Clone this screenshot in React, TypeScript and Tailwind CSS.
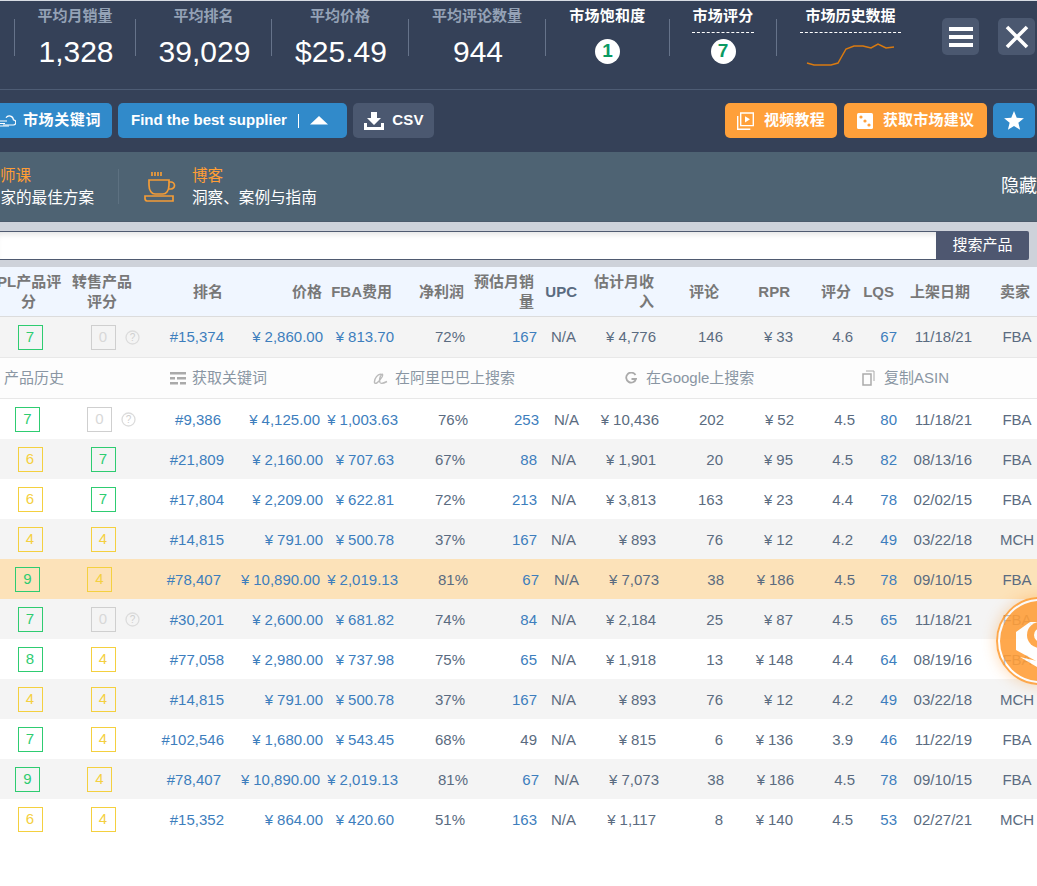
import React from "react";

const NORMAL = "grid-cols-[60px_86px_78px_99px_71px_71px_72px_39px_80px_67px_70px_60px_44px_75px_90px]";
const WIDE = "grid-cols-[55px_89px_77px_99px_78px_70px_71px_40px_80px_65px_70px_61px_42px_75px_90px]";
const HEAD = "grid-cols-[60px_86px_77px_99px_70px_72px_70px_43px_77px_65px_71px_61px_43px_76px_60px]";

type RowData = {
  a: number; b: number; rank: string; price: string; fba: string; net: string; sales: string; salesDark?: boolean;
  rev: string; reviews: string; rpr: string; rating: string; lqs: string; date: string; seller: string;
  wide?: boolean; bg: string; help?: boolean;
};

const rows: RowData[] = [
  { a: 7, b: 0, help: true, wide: true, bg: "bg-white", rank: "#9,386", price: "4,125.00", fba: "1,003.63", net: "76%", sales: "253", rev: "10,436", reviews: "202", rpr: "52", rating: "4.5", lqs: "80", date: "11/18/21", seller: "FBA" },
  { a: 6, b: 7, bg: "bg-[#f4f4f4]", rank: "#21,809", price: "2,160.00", fba: "707.63", net: "67%", sales: "88", rev: "1,901", reviews: "20", rpr: "95", rating: "4.5", lqs: "82", date: "08/13/16", seller: "FBA" },
  { a: 6, b: 7, bg: "bg-white", rank: "#17,804", price: "2,209.00", fba: "622.81", net: "72%", sales: "213", rev: "3,813", reviews: "163", rpr: "23", rating: "4.4", lqs: "78", date: "02/02/15", seller: "FBA" },
  { a: 4, b: 4, bg: "bg-[#f4f4f4]", rank: "#14,815", price: "791.00", fba: "500.78", net: "37%", sales: "167", rev: "893", reviews: "76", rpr: "12", rating: "4.2", lqs: "49", date: "03/22/18", seller: "MCH" },
  { a: 9, b: 4, wide: true, bg: "bg-[#fce2b9]", rank: "#78,407", price: "10,890.00", fba: "2,019.13", net: "81%", sales: "67", rev: "7,073", reviews: "38", rpr: "186", rating: "4.5", lqs: "78", date: "09/10/15", seller: "FBA" },
  { a: 7, b: 0, help: true, bg: "bg-[#f4f4f4]", rank: "#30,201", price: "2,600.00", fba: "681.82", net: "74%", sales: "84", rev: "2,184", reviews: "25", rpr: "87", rating: "4.5", lqs: "65", date: "11/18/21", seller: "FBA" },
  { a: 8, b: 4, bg: "bg-white", rank: "#77,058", price: "2,980.00", fba: "737.98", net: "75%", sales: "65", rev: "1,918", reviews: "13", rpr: "148", rating: "4.4", lqs: "64", date: "08/19/16", seller: "FBA" },
  { a: 4, b: 4, bg: "bg-[#f4f4f4]", rank: "#14,815", price: "791.00", fba: "500.78", net: "37%", sales: "167", rev: "893", reviews: "76", rpr: "12", rating: "4.2", lqs: "49", date: "03/22/18", seller: "MCH" },
  { a: 7, b: 4, bg: "bg-white", rank: "#102,546", price: "1,680.00", fba: "543.45", net: "68%", sales: "49", salesDark: true, rev: "815", reviews: "6", rpr: "136", rating: "3.9", lqs: "46", date: "11/22/19", seller: "FBA" },
  { a: 9, b: 4, wide: true, bg: "bg-[#f4f4f4]", rank: "#78,407", price: "10,890.00", fba: "2,019.13", net: "81%", sales: "67", rev: "7,073", reviews: "38", rpr: "186", rating: "4.5", lqs: "78", date: "09/10/15", seller: "FBA" },
  { a: 6, b: 4, bg: "bg-white", rank: "#15,352", price: "864.00", fba: "420.60", net: "51%", sales: "163", rev: "1,117", reviews: "8", rpr: "140", rating: "4.5", lqs: "53", date: "02/27/21", seller: "MCH" },
];

function Divider() {
  return <div className="w-[1px] h-[37px] bg-[#66738a] shrink-0 mt-[18px]" />;
}

function Stat({ label, value, w }: { label: string; value: string; w: string }) {
  return (
    <div className={`${w} shrink-0 flex flex-col items-center`}>
      <div className="text-[15px] font-bold text-[#94a2b6] leading-[20px] mt-[5px] whitespace-nowrap">{label}</div>
      <div className="text-[30px] text-white leading-[36px] mt-[8px] pl-[2px]">{value}</div>
    </div>
  );
}

function ScoreStat({ label, value, w, dashed }: { label: string; value: string; w: string; dashed?: boolean }) {
  return (
    <div className={`${w} shrink-0 flex flex-col items-center`}>
      <div className={`text-[15px] font-bold tracking-[0.25px] text-white leading-[20px] mt-[5px] h-[27px] pb-[6px] whitespace-nowrap ${dashed ? "border-b border-dashed border-white" : ""}`}>{label}</div>
      <div className="w-[25px] h-[25px] rounded-full bg-white text-[#0b9a63] text-[19px] font-bold flex items-center justify-center mt-[6px]">{value}</div>
    </div>
  );
}

function Spark() {
  return (
    <svg width="90" height="24" viewBox="0 0 90 24" className="mt-[10px]">
      <polyline fill="none" stroke="#d97a10" strokeWidth="1.5" points="1,20 8,22 25,22 32,20 40,6 48,3 57,3 65,5 72,1 80,5 88,4" />
    </svg>
  );
}

function Box({ v, help }: { v: number; help?: boolean }) {
  const color = v >= 7 ? "border-[#2ecc71] text-[#2ecc71]" : v > 0 ? "border-[#f4d03f] text-[#f4d03f]" : "border-[#cfcfcf] text-[#d8d8d8]";
  return (
    <div className={`relative w-[25px] h-[25px] border ${color} flex items-center justify-center text-[15px] mx-auto`}>
      {v}
      {help && (
        <svg width="15" height="15" viewBox="0 0 15 15" className="absolute left-[33px] top-[4px]">
          <circle cx="7.5" cy="7.5" r="6.5" fill="none" stroke="#dcdcdc" strokeWidth="1.3" />
          <text x="7.5" y="11" textAnchor="middle" fontSize="10" fill="#cfcfcf" fontFamily="Liberation Sans">?</text>
        </svg>
      )}
    </div>
  );
}

function Yen({ v }: { v: string }) {
  return (
    <>
      <span className="mr-[4px]">¥</span>
      {v}
    </>
  );
}

function Row({ r, first }: { r: RowData; first?: boolean }) {
  const shift = first ? "" : "pt-[2px]";
  const blue = `text-[#3d7ebd] ${shift}`;
  const dark = `text-[#5a6b80] ${shift}`;
  return (
    <div className={`grid ${r.wide ? WIDE : NORMAL} h-[40px] ${r.bg} items-center text-right text-[15px] whitespace-nowrap overflow-hidden`}>
      <div><Box v={r.a} /></div>
      <div><Box v={r.b} help={r.help} /></div>
      <div className={blue}>{r.rank}</div>
      <div className={blue}><Yen v={r.price} /></div>
      <div className={blue}><Yen v={r.fba} /></div>
      <div className={dark}>{r.net}</div>
      <div className={r.salesDark ? dark : blue}>{r.sales}</div>
      <div className={dark}>N/A</div>
      <div className={dark}><Yen v={r.rev} /></div>
      <div className={dark}>{r.reviews}</div>
      <div className={dark}><Yen v={r.rpr} /></div>
      <div className={dark}>{r.rating}</div>
      <div className={blue}>{r.lqs}</div>
      <div className={dark}>{r.date}</div>
      <div className={`${dark} text-center`}>{r.seller}</div>
    </div>
  );
}

function ActionItem({ w, icon, text, gap = "gap-[6px]" }: { w: string; icon: React.ReactNode; text: string; gap?: string }) {
  return (
    <div className={`${w} shrink-0 flex items-center ${gap}`}>
      {icon}
      <span>{text}</span>
    </div>
  );
}

export default function App() {
  return (
    <div className="relative w-[1037px] h-[886px] overflow-hidden bg-white text-[15px] font-['Liberation_Sans','Noto_Sans_CJK_SC',sans-serif]">
      {/* Top bar */}
      <div className="bg-[#354158] h-[152px] border-t border-[#d8dce3]">
        <div className="flex h-[88px] border-b border-[#4e5c74] box-content">
          <div className="w-[14px] shrink-0" />
          <Divider />
          <Stat label="平均月销量" value="1,328" w="w-[120px]" />
          <Divider />
          <Stat label="平均排名" value="39,029" w="w-[135px]" />
          <Divider />
          <Stat label="平均价格" value="$25.49" w="w-[136px]" />
          <Divider />
          <Stat label="平均评论数量" value="944" w="w-[136px]" />
          <Divider />
          <ScoreStat label="市场饱和度" value="1" w="w-[123px]" />
          <Divider />
          <ScoreStat label="市场评分" value="7" w="w-[106px]" dashed />
          <Divider />
          <div className="w-[147px] shrink-0 flex flex-col items-center">
            <div className="text-[15px] font-bold text-white leading-[20px] mt-[5px] h-[27px] pb-[6px] px-[5px] border-b border-dashed border-white whitespace-nowrap">市场历史数据</div>
            <Spark />
          </div>
          <div className="flex gap-[19px] ml-[18px] mt-[17px]">
            <div className="w-[37px] h-[37px] rounded-[5px] bg-[#4b5870] flex items-center justify-center">
              <svg width="24" height="20" viewBox="0 0 24 20"><path d="M0 0h24v4H0zM0 8h24v4H0zM0 16h24v4H0z" fill="#fff" /></svg>
            </div>
            <div className="w-[37px] h-[37px] rounded-[5px] bg-[#4b5870] flex items-center justify-center">
              <svg width="24" height="24" viewBox="0 0 24 24"><path d="M2 2l20 20M22 2L2 22" stroke="#fff" strokeWidth="3.6" /></svg>
            </div>
          </div>
        </div>
        <div className="flex items-start mt-[13px] h-[35px] font-bold text-white">
          <div className="w-[112px] h-[35px] bg-[#318aca] rounded-r-[5px] flex items-center justify-end pr-[11px] gap-[7px] shrink-0">
            <svg width="16" height="14" viewBox="0 0 16 14" fill="none" stroke="#fff" strokeWidth="1.2">
              <path d="M3 11h10a2.6 2.6 0 0 0 .4-5.2A4 4 0 0 0 6 3.8" />
              <path d="M0 7h7M0 9.5h5M0 12h9" />
            </svg>
            <span className="text-[15px] tracking-[0.6px] whitespace-nowrap">市场关键词</span>
          </div>
          <div className="w-[229px] h-[35px] ml-[6px] bg-[#318aca] rounded-[5px] flex items-center pl-[13px] shrink-0">
            <span className="text-[15px] whitespace-nowrap">Find the best supplier</span>
            <div className="w-[1px] h-[14px] bg-white ml-[11px]" />
            <svg width="18" height="9" viewBox="0 0 18 9" className="ml-[11px]"><path d="M9 0l9 8.5H0z" fill="#fff" /></svg>
          </div>
          <div className="w-[81px] h-[35px] ml-[6px] bg-[#4b5870] rounded-[5px] flex items-center justify-center gap-[8px] shrink-0 pl-[1px]">
            <svg width="20" height="18" viewBox="0 0 20 18" fill="#fff">
              <path d="M7 0h6v6h4l-7 7-7-7h4z" />
              <path d="M0 11h3v4h14v-4h3v7H0z" />
            </svg>
            <span className="text-[15px] tracking-[0.2px]">CSV</span>
          </div>
          <div className="w-[112px] h-[35px] ml-[291px] bg-[#ffa03a] rounded-[5px] flex items-center justify-center gap-[10px] shrink-0">
            <svg width="17" height="18" viewBox="0 0 17 18" fill="none" stroke="#fff" strokeWidth="1.4">
              <path d="M3.7 1h12.6v12.6H3.7z" />
              <path d="M.7 4v13.3h12.6" />
              <path d="M8 4.2l5 3.1-5 3.1z" fill="#fff" stroke="none" />
            </svg>
            <span className="text-[15px] tracking-[0.2px] whitespace-nowrap">视频教程</span>
          </div>
          <div className="w-[143px] h-[35px] ml-[7px] bg-[#ffa03a] rounded-[5px] flex items-center justify-center gap-[10px] shrink-0">
            <svg width="16" height="16" viewBox="0 0 16 16">
              <rect width="16" height="16" rx="1.5" fill="#fff" />
              <circle cx="4" cy="4" r="1.6" fill="#ffa03a" />
              <circle cx="8" cy="8" r="1.6" fill="#ffa03a" />
              <circle cx="12" cy="12" r="1.6" fill="#ffa03a" />
            </svg>
            <span className="text-[15px] tracking-[0.2px] whitespace-nowrap">获取市场建议</span>
          </div>
          <div className="w-[42px] h-[35px] ml-[6px] bg-[#318aca] rounded-[5px] flex items-center justify-center shrink-0">
            <svg width="20" height="19" viewBox="0 0 24 23"><path d="M12 0l3.300 8.100 8.700.6-6.700 5.600 2.100 8.500L12 18.200l-7.400 4.600 2.100-8.500L0 8.700l8.700-.6z" fill="#fff" /></svg>
          </div>
        </div>
      </div>

      {/* Promo strip */}
      <div className="bg-[#4e6373] h-[69px] flex items-center relative">
        <div className="w-[118px] shrink-0 flex flex-col items-end pr-[24px] leading-[22px] whitespace-nowrap text-[15.6px]">
          <span className="text-[#ff9d35] self-start">师课</span>
          <span className="text-white">家的最佳方案</span>
        </div>
        <div className="w-[1px] h-[35px] bg-[#5d7181]" />
        <svg width="32" height="32" viewBox="0 0 32 32" fill="none" stroke="#f39c37" strokeWidth="1.7" className="ml-[25px]">
          <path d="M8 1v4M11 1v4M14 1v4M17 1v4" />
          <path d="M5 9h20v5c0 6-3 9-6 9h-8c-3 0-6-3-6-9z" />
          <path d="M25 11h2a2.700 2.700 0 0 1 0 7h-3" />
          <path d="M1 25h28v5H3a2.500 2.500 0 0 1-2-2.500z" />
        </svg>
        <div className="ml-[16px] flex flex-col leading-[22px] text-[15.6px] whitespace-nowrap">
          <span className="text-[#ff9d35]">博客</span>
          <span className="text-white">洞察、案例与指南</span>
        </div>
        <span className="ml-auto text-white text-[18px] whitespace-nowrap">隐藏</span>
      </div>

      {/* Search */}
      <div className="bg-[#ced2da] h-[46px] border-t border-[#4c5a6b] pt-[9px] flex items-start pr-[8px]">
        <div className="w-[936px] h-[29px] bg-white border-y border-[#4f5a70] shadow-[inset_0_6px_6px_-4px_rgba(0,0,0,0.12)]" />
        <button className="w-[93px] h-[29px] bg-[#4e5770] text-white text-[15px] rounded-r-[2px] flex items-center justify-center">搜索产品</button>
      </div>

      {/* Header */}
      <div className={`grid ${HEAD} h-[50px] bg-[#f0f6ff] border-b border-[#dcdcdc] items-center text-right text-[15px] font-bold text-[#787878] leading-[20px] whitespace-nowrap`}>
        <div className="text-center -ml-[3px]">PL产品评<br />分</div>
        <div className="text-center pr-[2px]">转售产品<br />评分</div>
        <div>排名</div>
        <div>价格</div>
        <div>FBA费用</div>
        <div>净利润</div>
        <div>预估月销<br />量</div>
        <div className="text-[#5a6b80]">UPC</div>
        <div>估计月收<br />入</div>
        <div>评论</div>
        <div>RPR</div>
        <div>评分</div>
        <div>LQS</div>
        <div>上架日期</div>
        <div>卖家</div>
      </div>

      <Row
        first
        r={{ a: 7, b: 0, help: true, bg: "bg-[#f4f4f4]", rank: "#15,374", price: "2,860.00", fba: "813.70", net: "72%", sales: "167", rev: "4,776", reviews: "146", rpr: "33", rating: "4.6", lqs: "67", date: "11/18/21", seller: "FBA" }}
      />

      {/* Action row */}
      <div className="h-[42px] bg-[#fdfdfd] border-y border-[#e8e8e8] flex items-center text-[15px] text-[#8a96a3] whitespace-nowrap pl-[4px]">
        <div className="w-[166px] shrink-0">产品历史</div>
        <ActionItem
          w="w-[203px]"
          icon={
            <svg width="16" height="13" viewBox="0 0 16 13" fill="#aaa">
              <path d="M0 0h16v2.500H0zM0 5h5v2.500H0zM7 5h9v2.500H7zM0 10h8v2.500H0zM10 10h6v2.500h-6z" />
            </svg>
          }
          text="获取关键词"
        />
        <ActionItem
          w="w-[252px]"
          gap="gap-[7px]"
          icon={
            <svg width="15" height="13" viewBox="0 0 15 13" fill="none" stroke="#bbb" strokeWidth="1.4">
              <path d="M8.500 2.500C5 1 1 7 1.500 10.500 2 13 6 10 9 5c.8-1.500 1-3.500-.5-2.500C7 4 6 8 7 10.500c.8 1.500 3 1 7-1" />
            </svg>
          }
          text="在阿里巴巴上搜索"
        />
        <ActionItem
          w="w-[237px]"
          gap="gap-[9px]"
          icon={
            <svg width="12" height="13" viewBox="0 0 12 13" fill="none" stroke="#aaa" strokeWidth="1.8">
              <path d="M10.500 3A5 5 0 1 0 11 7H6.500" />
            </svg>
          }
          text="在Google上搜索"
        />
        <ActionItem
          w="w-[120px]"
          gap="gap-[9px]"
          icon={
            <svg width="13" height="16" viewBox="0 0 13 16" fill="none" stroke="#aaa" strokeWidth="1.5">
              <path d="M1 4h8v11H1z" />
              <path d="M4 1h8v10" strokeWidth="1" />
            </svg>
          }
          text="复制ASIN"
        />
      </div>

      {rows.map((r, i) => (
        <Row key={i} r={r} />
      ))}

      {/* Floating button */}
      <div className="absolute left-[996px] top-[597px] w-[88px] h-[88px] rounded-full border-[2px] border-[#ffa03a] bg-white/60 shadow-[0_0_14px_rgba(255,160,58,0.45)] opacity-90">
        <div className="w-[80px] h-[80px] m-[2px] rounded-full bg-[#ff9f3a] relative overflow-hidden">
          <svg width="80" height="80" viewBox="0 0 80 80" className="absolute left-0 top-0">
            <path d="M16 31L30 21H70V60H36L16 49Z" fill="#fff" />
            <path d="M20 56L37 66L60 58V54L37 60Z" fill="#fff" />
            <circle cx="40" cy="34" r="13" fill="#ff9f3a" />
            <circle cx="41" cy="34" r="7" fill="#fff" />
          </svg>
        </div>
      </div>
    </div>
  );
}
